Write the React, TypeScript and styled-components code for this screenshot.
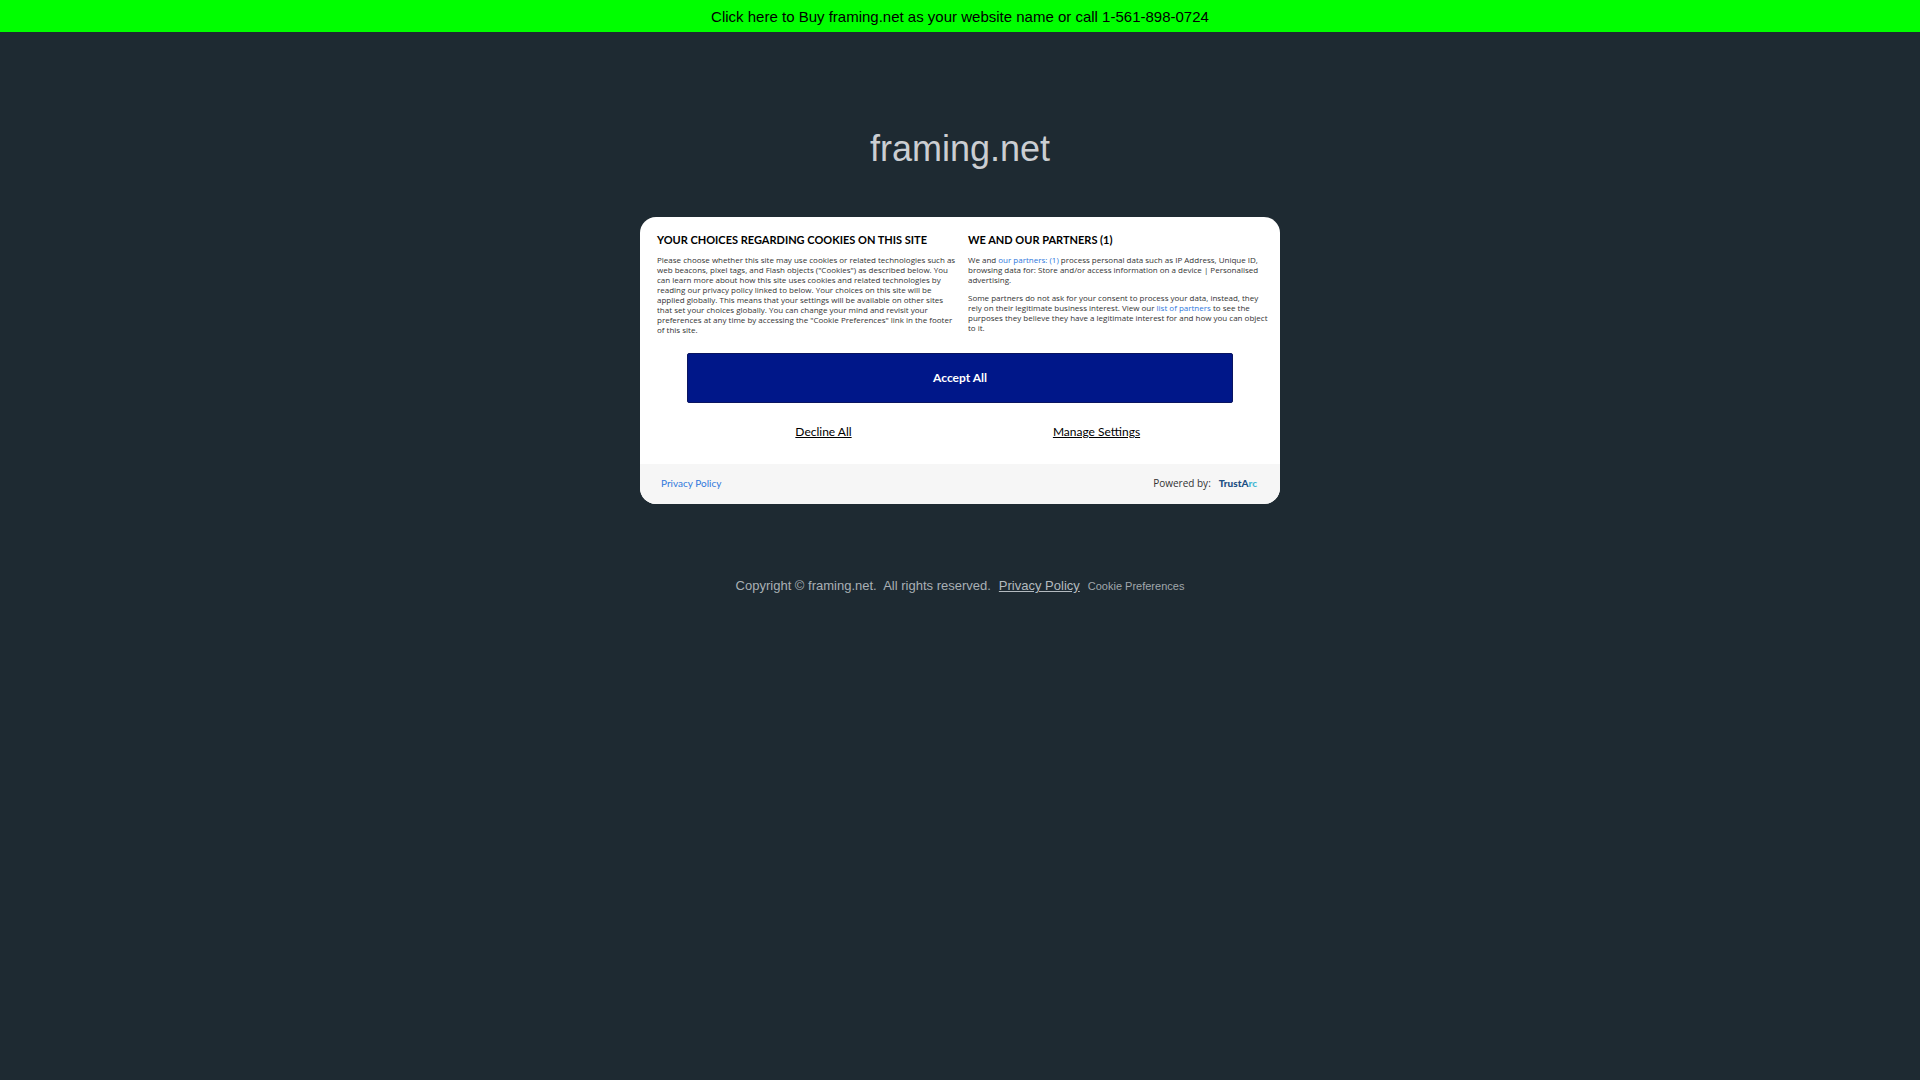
import React from 'react';
import styled, { createGlobalStyle } from 'styled-components';

const GlobalStyle = createGlobalStyle`
  body {
    margin: 0;
    min-height: 100vh;
    background: #1e2a32;
    font-family: "Liberation Sans", Arial, sans-serif;
  }
`;

const SaleBanner = styled.a`
  display: block;
  padding: 9px 0 7px;
  background: #00ff00;
  color: #000;
  font-size: 15px;
  line-height: 16px;
  text-align: center;
  text-decoration: none;
`;

const Page = styled.main`
  display: flex;
  flex-direction: column;
  align-items: center;
`;

const SiteName = styled.h1`
  margin: 97px 0 48px;
  color: #cbced2;
  font-size: 36px;
  font-weight: 400;
  line-height: 40px;
`;

const Panel = styled.section`
  box-sizing: border-box;
  width: 100%;
  max-width: 640px;
  overflow: hidden;
  border-radius: 16px;
  background: #fff;
  color: #333;
  font-family: Lato, "Open Sans", sans-serif;
`;

const Columns = styled.div`
  display: grid;
  grid-template-columns: repeat(2, minmax(0, 1fr));
  gap: 16px;
  padding: 16px 17px 0;
`;

const Heading = styled.h2`
  margin: 0 0 8px;
  color: #000;
  font-size: 11px;
  font-weight: 700;
  line-height: 14px;
  white-space: nowrap;
`;

const Text = styled.p`
  margin: 0 0 8px;
  font-family: "Open Sans", "Noto Sans", sans-serif;
  font-size: 8px;
  line-height: 10px;
  white-space: nowrap;
`;

const BlueLink = styled.a<{ $size: number }>`
  color: #2f78dc;
  font-size: ${(p) => p.$size}px;
  text-decoration: none;
`;

const Actions = styled.div`
  display: grid;
  grid-template-columns: 1fr 1fr;
  row-gap: 16px;
  padding: 10px 47px 19px;
`;

const AcceptButton = styled.button`
  grid-column: 1 / -1;
  height: 50px;
  border: 1px solid #0a1560;
  border-radius: 2px;
  background: #001789;
  color: #fff;
  font: 700 12px/16px Lato, "Open Sans", sans-serif;
`;

const TextButton = styled.button`
  justify-self: center;
  padding: 4px 8px;
  border: 0;
  background: none;
  color: #000;
  font: 400 12px/18px Lato, "Open Sans", sans-serif;
  text-decoration: underline;
`;

const PanelFooter = styled.footer`
  box-sizing: border-box;
  display: flex;
  align-items: center;
  justify-content: space-between;
  height: 40px;
  padding: 0 23px 2px 21px;
  background: #f6f6f6;
  font-size: 10px;
  line-height: 14px;
`;

const Powered = styled.div`
  display: flex;
  align-items: baseline;
  gap: 8px;
  font-family: "Open Sans", "Noto Sans", sans-serif;
`;

const Wordmark = styled.span`
  color: #1d4f83;
  font-family: Lato, sans-serif;
  font-weight: 900;
  font-size: 10px;
`;

const WordmarkTail = styled.span`
  color: #45b8d4;
`;

const Legal = styled.footer`
  display: flex;
  align-items: center;
  gap: 8px;
  margin-top: 74px;
  color: #a9b0b5;
  font-size: 13px;
  line-height: 16px;
`;

const LegalLink = styled.a`
  color: #b3babf;
`;

const Preferences = styled.a`
  color: #a0a7ac;
  font-size: 11px;
  text-decoration: none;
`;

export default function App() {
  return (
    <>
      <GlobalStyle />
      <SaleBanner href="#buy">Click here to Buy framing.net as your website name or call 1-561-898-0724</SaleBanner>
      <Page>
        <SiteName>framing.net</SiteName>
        <Panel aria-label="Cookie choices">
          <Columns>
            <div>
              <Heading>YOUR CHOICES REGARDING COOKIES ON THIS SITE</Heading>
              <Text>
                Please choose whether this site may use cookies or related technologies such as<br />
                web beacons, pixel tags, and Flash objects ("Cookies") as described below. You<br />
                can learn more about how this site uses cookies and related technologies by<br />
                reading our privacy policy linked to below. Your choices on this site will be<br />
                applied globally. This means that your settings will be available on other sites<br />
                that set your choices globally. You can change your mind and revisit your<br />
                preferences at any time by accessing the "Cookie Preferences" link in the footer<br />
                of this site.
              </Text>
            </div>
            <div>
              <Heading>WE AND OUR PARTNERS (1)</Heading>
              <Text>
                We and <BlueLink $size={8} href="#partners">our partners: (1)</BlueLink> process personal data such as IP Address, Unique ID,<br />
                browsing data for: Store and/or access information on a device | Personalised<br />
                advertising.
              </Text>
              <Text>
                Some partners do not ask for your consent to process your data, instead, they<br />
                rely on their legitimate business interest. View our <BlueLink $size={8} href="#list">list of partners</BlueLink> to see the<br />
                purposes they believe they have a legitimate interest for and how you can object<br />
                to it.
              </Text>
            </div>
          </Columns>
          <Actions>
            <AcceptButton type="button">Accept All</AcceptButton>
            <TextButton type="button">Decline All</TextButton>
            <TextButton type="button">Manage Settings</TextButton>
          </Actions>
          <PanelFooter>
            <BlueLink $size={10} href="#privacy">Privacy Policy</BlueLink>
            <Powered>
              <span>Powered by:</span>
              <Wordmark>TrustA<WordmarkTail>rc</WordmarkTail></Wordmark>
            </Powered>
          </PanelFooter>
        </Panel>
        <Legal>
          <span>Copyright © framing.net.&nbsp; All rights reserved.</span>
          <LegalLink href="#privacy-policy">Privacy Policy</LegalLink>
          <Preferences href="#preferences">Cookie Preferences</Preferences>
        </Legal>
      </Page>
    </>
  );
}
